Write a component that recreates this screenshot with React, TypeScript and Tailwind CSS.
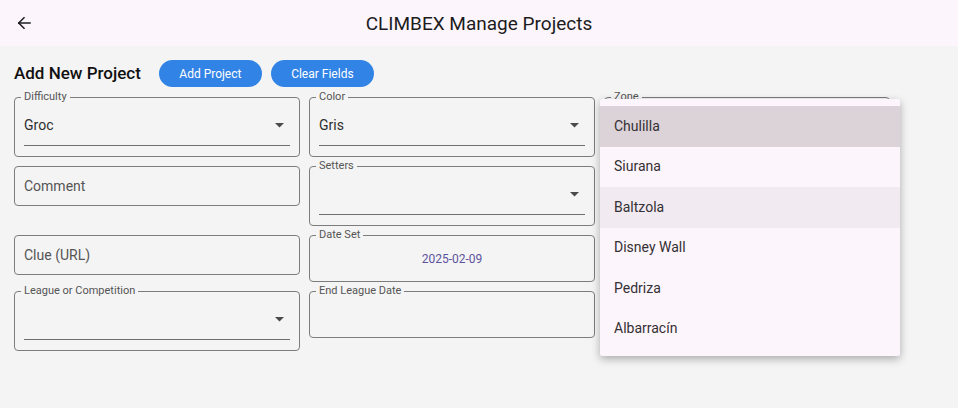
import React from "react";

const Arrow = () => (
  <svg width="9" height="4.5" viewBox="0 0 10 5" className="mr-[6px]">
    <path d="M0 0 L10 0 L5 5 Z" fill="#4a4a4a" />
  </svg>
);

const Label = ({ text }: { text: string }) => (
  <span className="absolute -top-[8px] left-[6px] px-[3px] bg-[#f4f4f4] text-[11px] leading-[14px] text-[#555]">
    {text}
  </span>
);

const SelectField = ({ label, value }: { label: string; value?: string }) => (
  <div className="relative h-[60px] border border-[#7c7c7c] rounded-[4px] px-[9px] pt-[8px]">
    <Label text={label} />
    <div className="h-[40px] flex items-center justify-between border-b border-[#6e6e6e]">
      <span className="text-[14px] text-[#2e2e2e]">{value ?? ""}</span>
      <Arrow />
    </div>
  </div>
);

const TextField = ({ placeholder }: { placeholder: string }) => (
  <div className="h-[40px] border border-[#7c7c7c] rounded-[4px] px-[9px] flex items-center">
    <span className="text-[14px] text-[#555]">{placeholder}</span>
  </div>
);

const DateField = ({ label, value }: { label: string; value?: string }) => (
  <div className="relative h-[47px] border border-[#7c7c7c] rounded-[4px] flex items-center justify-center">
    <Label text={label} />
    <span className="text-[12px] text-[#5d539c]">{value ?? ""}</span>
  </div>
);

const zones = ["Chulilla", "Siurana", "Baltzola", "Disney Wall", "Pedriza", "Albarracín"];

export default function App() {
  return (
    <div
      className="relative w-[958px] h-[408px] bg-[#f4f4f4] overflow-hidden"
      style={{ fontFamily: "Roboto, 'Noto Sans', sans-serif" }}
    >
      <header className="h-[46px] bg-[#fcf6fc] grid grid-cols-[48px_1fr_48px] items-center">
        <div className="pl-[15px] flex items-center">
          <svg width="18" height="18" viewBox="0 0 24 24" fill="none" stroke="#1d1b20" strokeWidth="2" strokeLinecap="square">
            <path d="M20 12H5" />
            <path d="M12 5l-7 7 7 7" />
          </svg>
        </div>
        <h1 className="text-center text-[19px] text-[#1d1b20] leading-none">CLIMBEX Manage Projects</h1>
        <div />
      </header>

      <div className="px-[14px]">
        <div className="mt-[14px] h-[27px] flex items-center">
          <span className="text-[17px] font-medium text-[#111] mr-[18px]">Add New Project</span>
          <button className="w-[103px] h-[27px] rounded-full bg-[#3183e6] text-white text-[12px] mr-[9px]">
            Add Project
          </button>
          <button className="w-[103px] h-[27px] rounded-full bg-[#3183e6] text-white text-[12px]">
            Clear Fields
          </button>
        </div>

        <div className="mt-[10px] grid grid-cols-[286px_286px_286px] gap-x-[9px] gap-y-[9px] items-start">
          <SelectField label="Difficulty" value="Groc" />
          <SelectField label="Color" value="Gris" />
          <SelectField label="Zone" />

          <TextField placeholder="Comment" />
          <SelectField label="Setters" />
          <div />

          <TextField placeholder="Clue (URL)" />
          <DateField label="Date Set" value="2025-02-09" />
          <div />

          <SelectField label="League or Competition" />
          <DateField label="End League Date" />
          <div />
        </div>
      </div>

      <div className="absolute left-[600px] top-[99px] w-[300px] py-[7px] bg-[#fcf5fb] shadow-[0_3px_8px_rgba(0,0,0,0.3)] rounded-[2px]">
        {zones.map((z, i) => (
          <div
            key={z}
            className={
              "h-[40.5px] flex items-center pl-[14px] text-[14px] text-[#343034] " +
              (i === 0 ? "bg-[#dcd3d9]" : i === 2 ? "bg-[#f1eaf1]" : "")
            }
          >
            {z}
          </div>
        ))}
      </div>
    </div>
  );
}
